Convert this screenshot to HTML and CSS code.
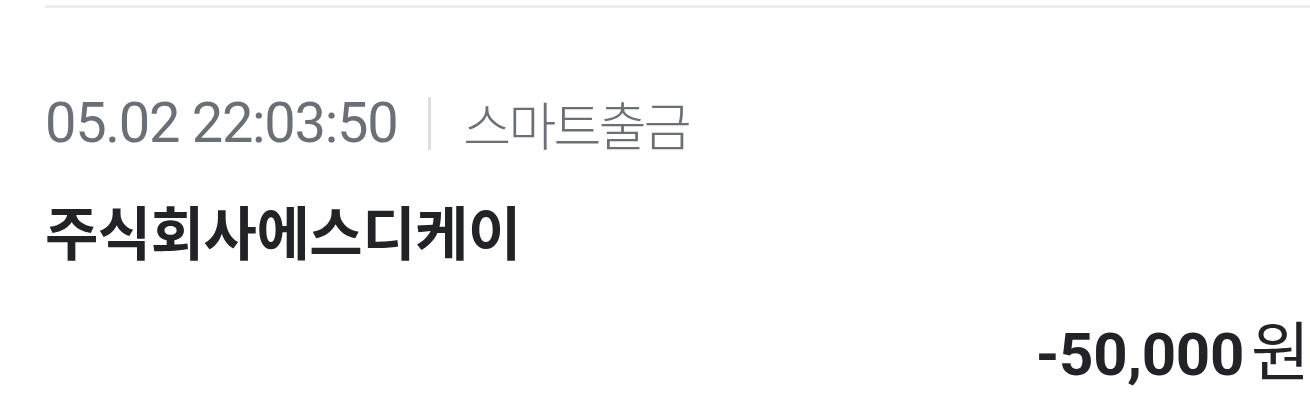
FILE: index.html
```html
<!DOCTYPE html>
<html>
<head>
  <title>거래내역</title>
  <meta charset="UTF-8">
  <link rel="stylesheet" href="styles.css">
</head>
<body>
<div class="item">
  <div class="topLine"></div>
  <div class="meta">
    <span class="time">05.02 22:03:50</span>
    <span class="sep"></span>
    <span class="kind">스마트출금</span>
  </div>
  <div class="name">주식회사에스디케이</div>
  <div class="amount">
    <span class="money">-50,000</span>
    <span class="won">원</span>
  </div>
</div>
</body>
</html>
```

FILE: styles.css
```css
body {
  margin: 0;
  background: #ffffff;
  font-family: Roboto, "Noto Sans CJK KR", sans-serif;
}

.item {
  padding: 5px 0 0 45px;
}

.topLine {
  height: 3px;
  background-color: #ebedf0;
}

.meta {
  display: flex;
  align-items: center;
  margin-top: 85px;
  height: 60px;
}

.time {
  font-size: 56px;
  letter-spacing: -1.3px;
  color: #6b6f76;
}

.sep {
  width: 3px;
  height: 53px;
  background-color: #dcdee1;
  margin: 0 32px 0 31px;
}

.kind {
  font-family: "Noto Sans CJK KR", sans-serif;
  font-size: 52px;
  font-weight: 300;
  letter-spacing: -2.7px;
  color: #6b6f76;
}

.name {
  margin-top: 42px;
  font-family: "Noto Sans CJK KR", sans-serif;
  font-size: 58px;
  font-weight: 700;
  letter-spacing: -0.5px;
  color: #222327;
  line-height: 70px;
}

.amount {
  display: flex;
  justify-content: flex-end;
  align-items: baseline;
  margin-top: 47px;
  line-height: 70px;
}

.money {
  font-size: 60px;
  font-weight: 700;
  letter-spacing: -0.3px;
  color: #222327;
}

.won {
  font-family: "Noto Sans CJK KR", sans-serif;
  font-size: 64px;
  font-weight: 400;
  color: #222327;
  margin-left: 7px;
}
```
